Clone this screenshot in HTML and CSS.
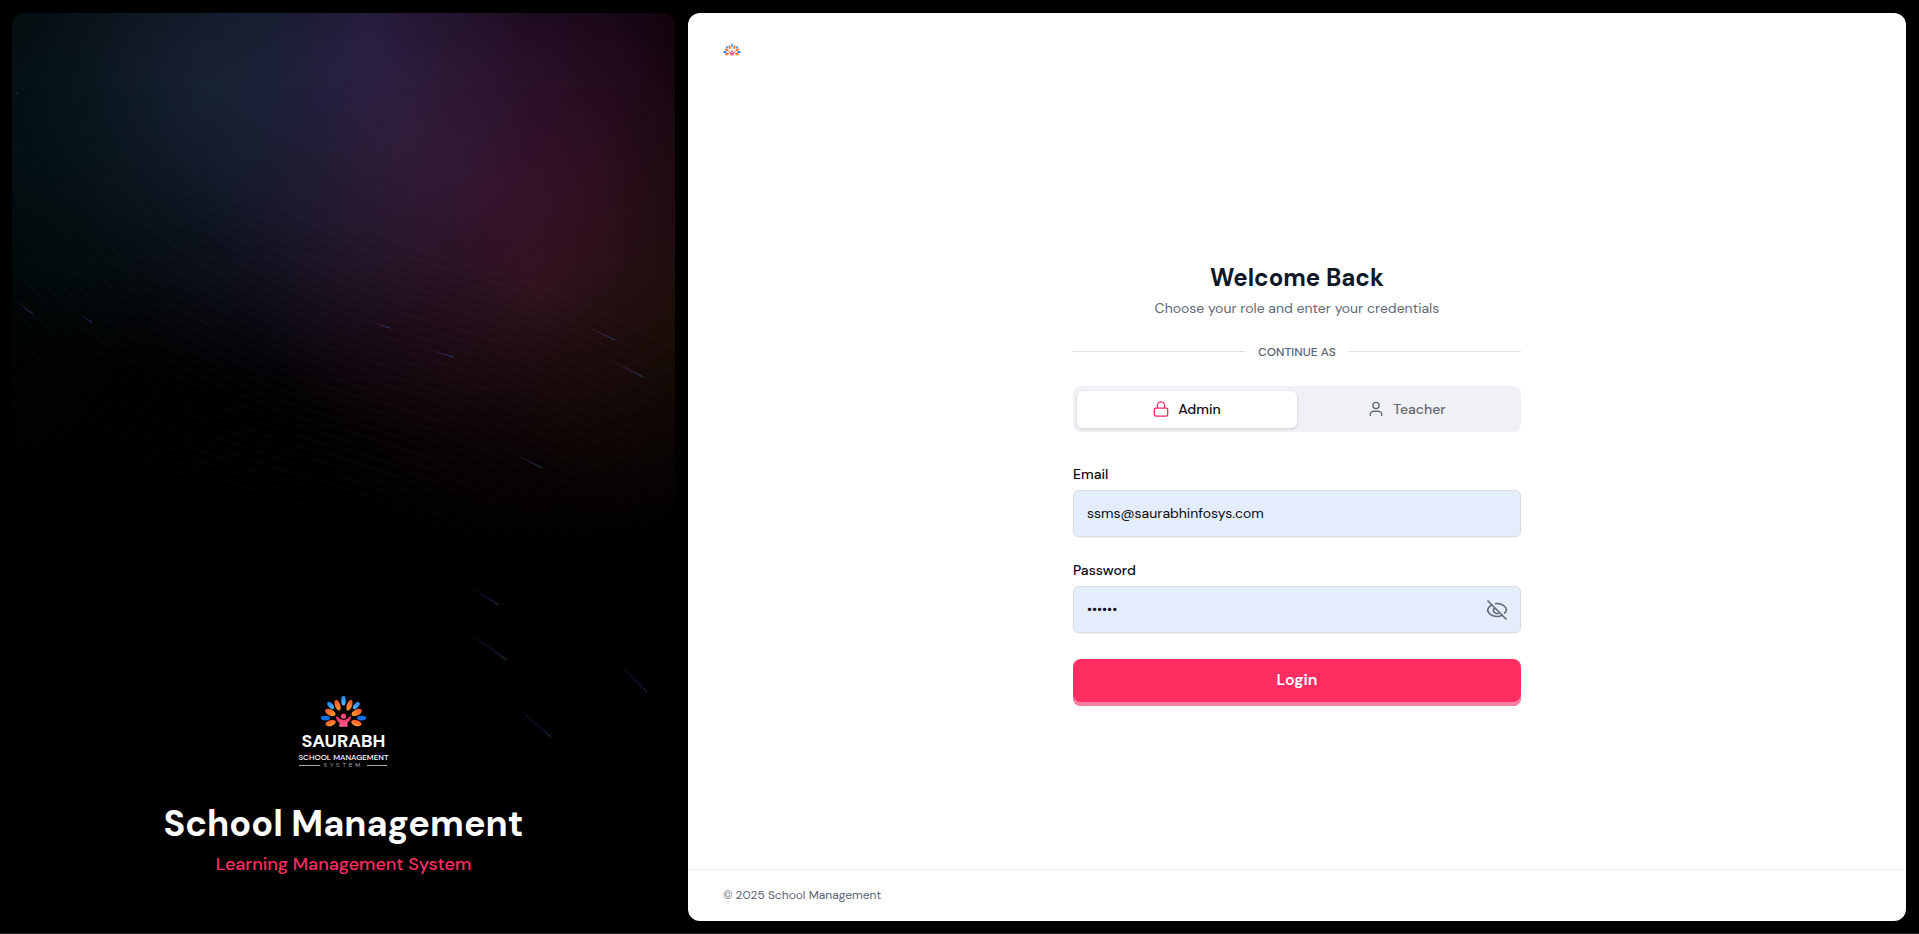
FILE: index.html
```html
<!DOCTYPE html>
<html lang="en">
	<head>
		<meta charset="UTF-8">
		<meta name="viewport" content="width=device-width, initial-scale=1">
		<title>School Management</title>
		<link rel="stylesheet" href="styles.css">
	</head>
	<body>
		<svg class="defs" width="0" height="0" aria-hidden="true">
			<defs>
				<linearGradient id="orange" x1="0" y1="0" x2="0" y2="1">
					<stop offset="0" stop-color="#f4512c"/>
					<stop offset="1" stop-color="#ff9a2e"/>
				</linearGradient>
				<linearGradient id="sky" x1="0" y1="0" x2="0" y2="1">
					<stop offset="0" stop-color="#1c84ea"/>
					<stop offset="1" stop-color="#5bb8ff"/>
				</linearGradient>
				<linearGradient id="pink" x1="0" y1="0" x2="0" y2="1">
					<stop offset="0" stop-color="#f22f62"/>
					<stop offset="1" stop-color="#ff5f8c"/>
				</linearGradient>
				<symbol id="emblem" viewBox="120 45 142 97">
					<ellipse cx="191" cy="62" rx="7" ry="15" fill="url(#sky)"/>
					<ellipse cx="173" cy="76" rx="8" ry="17" transform="rotate(-20 173 76)" fill="url(#orange)"/>
					<ellipse cx="209" cy="76" rx="8" ry="17" transform="rotate(20 209 76)" fill="url(#orange)"/>
					<ellipse cx="152" cy="77" rx="7" ry="13" transform="rotate(-42 152 77)" fill="url(#sky)"/>
					<ellipse cx="230" cy="77" rx="7" ry="13" transform="rotate(42 230 77)" fill="url(#sky)"/>
					<ellipse cx="151" cy="98" rx="9" ry="17" transform="rotate(-64 151 98)" fill="url(#orange)"/>
					<ellipse cx="231" cy="98" rx="9" ry="17" transform="rotate(64 231 98)" fill="url(#orange)"/>
					<ellipse cx="136" cy="115" rx="14" ry="7" fill="#1170e4"/>
					<ellipse cx="246" cy="115" rx="14" ry="7" fill="#1170e4"/>
					<ellipse cx="152" cy="130" rx="16" ry="9" transform="rotate(-16 152 130)" fill="url(#orange)"/>
					<ellipse cx="230" cy="130" rx="16" ry="9" transform="rotate(16 230 130)" fill="url(#orange)"/>
					<circle cx="191" cy="109" r="8" fill="url(#pink)"/>
					<path d="M168 111Q171 108 174 112Q181 121 191 121Q201 121 208 112Q211 108 214 111Q213 123 203 129L204 141H178L179 129Q169 123 168 111Z" fill="url(#pink)"/>
				</symbol>
			</defs>
		</svg>

		<div class="page">
			<aside class="hero">
				<svg class="beams" viewBox="0 0 696 316" aria-hidden="true">
					<defs>
						<radialGradient id="beamFade" cx="0" cy="0" r="1" gradientUnits="userSpaceOnUse" gradientTransform="translate(352 34) rotate(90) scale(555 1560)">
							<stop offset="0.07" stop-color="#d4d4d4"/>
							<stop offset="0.24" stop-color="#d4d4d4"/>
							<stop offset="0.43" stop-color="#fff" stop-opacity="0"/>
						</radialGradient>
					</defs>
				</svg>
				<svg class="sparks" viewBox="0 0 663 908" preserveAspectRatio="xMidYMid slice" aria-hidden="true"></svg>

				<div class="logo">
					<svg class="logo-mark" aria-hidden="true"><use href="#emblem"/></svg>
					<strong class="logo-name">SAURABH</strong>
					<span class="logo-sub">SCHOOL MANAGEMENT</span>
					<span class="logo-line">SYSTEM</span>
				</div>
				<h1>School Management</h1>
				<p class="tagline">Learning Management System</p>
			</aside>

			<main class="panel">
				<header class="top">
					<svg class="top-mark" role="img" aria-label="Saurabh"><use href="#emblem"/></svg>
				</header>

				<section class="content">
					<form class="login">
						<h2>Welcome Back</h2>
						<p class="intro">Choose your role and enter your credentials</p>
						<div class="divider">CONTINUE AS</div>

						<div class="roles">
							<button type="button" class="role selected">
								<svg viewBox="0 0 18 18" aria-hidden="true"><path d="M5 8V5a4 4 0 0 1 8 0V8M3 8h12a1.500 1.500 0 0 1 1.500 1.500v6a1.500 1.500 0 0 1-1.500 1.500h-12a1.500 1.500 0 0 1-1.500-1.500v-6A1.500 1.500 0 0 1 3 8z"/></svg>
								Admin
							</button>
							<button type="button" class="role">
								<svg viewBox="0 0 18 18" aria-hidden="true"><circle cx="9" cy="5" r="3.500"/><path d="M2.500 17v-1.500a4 4 0 0 1 4-4h5a4 4 0 0 1 4 4V17"/></svg>
								Teacher
							</button>
						</div>

						<label for="email">Email</label>
						<input id="email" type="email" value="ssms@saurabhinfosys.com">

						<label for="password">Password</label>
						<div class="password">
							<input id="password" type="password" value="123456">
							<button type="button" class="eye" aria-label="Show password">
								<svg viewBox="0 0 22 22" aria-hidden="true"><path d="M1.500 1.500l19 19M9 4.700Q10 4.500 11 4.500c5 0 9 3 9.500 6.500q-.4 2-2.300 3.700M5.200 6.200C3.200 7.500 2 9.300 1.500 11c.7 3.500 4.500 6.500 9.500 6.500q2.600 0 4.700-1M8.500 9a3.200 3.200 0 1 0 4.600 4.500"/></svg>
							</button>
						</div>

						<button type="submit" class="submit">Login</button>
					</form>
				</section>

				<footer>© 2025 School Management</footer>
			</main>
		</div>

		<script>
			var ns="http://www.w3.org/2000/svg";
			var beams=document.getElementsByClassName("beams")[0];
			var sparks=document.getElementsByClassName("sparks")[0];
			// fine curved lines, each one shifted a step right and up
			for(var i=0;i<50;i++){
				var x=i*7;
				var y=-i*8;
				var p=document.createElementNS(ns,"path");
				p.setAttribute("d","M"+(x-380)+" "+(y-189)+"C"+(x-380)+" "+(y-189)+" "+(x-312)+" "+(y+216)+" "+(x+152)+" "+(y+343)+"C"+(x+616)+" "+(y+470)+" "+(x+684)+" "+(y+875)+" "+(x+684)+" "+(y+875));
				beams.appendChild(p);
			}
			var list=[
				[1,76,6,81],[2,286,21,301],[69,303,80,309],[362,310,378,315],
				[421,338,441,344],[578,315,603,327],[600,348,631,364],[503,441,530,455],
				[455,572,487,592],[451,617,495,647],[604,647,635,679],[499,689,539,724]
			];
			for(var j=0;j<list.length;j++){
				var s=list[j];
				var g=document.createElementNS(ns,"linearGradient");
				g.id="spark"+j;
				g.setAttribute("gradientUnits","userSpaceOnUse");
				g.setAttribute("x1",s[0]);
				g.setAttribute("y1",s[1]);
				g.setAttribute("x2",s[2]);
				g.setAttribute("y2",s[3]);
				g.innerHTML='<stop offset="0" stop-color="#ae48ff" stop-opacity="0"/><stop offset="0.7" stop-color="#6344f5"/><stop offset="1" stop-color="#18ccfc"/>';
				sparks.appendChild(g);
				var l=document.createElementNS(ns,"path");
				l.setAttribute("d","M"+s[0]+" "+s[1]+"L"+s[2]+" "+s[3]);
				l.setAttribute("stroke","url(#spark"+j+")");
				sparks.appendChild(l);
			}
		</script>
	</body>
</html>
```
FILE: styles.css
```css
*{margin:0;padding:0;box-sizing:border-box;}
body{background:#000;font-family:"DM Sans",Inter,"Liberation Sans",sans-serif;font-size:14px;line-height:20px;color:#0a0a14;}
button,input{font:inherit;color:inherit;border:0;}
button{cursor:pointer;}
.defs{position:absolute;}
.page{display:flex;gap:13px;min-height:100vh;padding:13px 13px 12px 12px;border-bottom:1px solid #2e2e2e;}

/* left side */
.hero{
	flex:0 0 35%;display:flex;flex-direction:column;align-items:center;justify-content:flex-end;
	position:relative;overflow:hidden;padding:0 24px 43px;border-radius:12px;color:#fff;
	background:
		radial-gradient(ellipse 320px 290px at 30% 9%,rgb(12,28,36),#000),
		radial-gradient(ellipse 320px 400px at 54% 3%,rgb(26,16,42),#000),
		radial-gradient(ellipse 280px 260px at 71% 20%,rgb(22,6,20),#000),
		radial-gradient(ellipse 280px 270px at 79% 30%,rgb(26,10,8),#000),
		radial-gradient(ellipse 160px 320px at 0% 14%,rgb(0,8,8),#000),
		radial-gradient(ellipse 200px 240px at 100% 32%,rgb(12,7,3),#000),
		radial-gradient(ellipse 320px 280px at 92% 5%,rgb(20,3,12),#000),
		#000;
	background-blend-mode:screen;
}
.beams,.sparks{position:absolute;top:0;left:0;width:100%;height:100%;fill:none;}
.beams path{stroke:url(#beamFade);stroke-opacity:.04;stroke-width:1;}
.sparks{opacity:.35;}
.logo{position:relative;display:flex;flex-direction:column;align-items:center;width:88px;margin-bottom:33px;}
.logo-mark{width:47px;height:32px;margin-bottom:2px;}
.logo-name{font-size:18px;line-height:24px;}
.logo-sub{font-size:8px;line-height:8px;font-weight:500;white-space:nowrap;}
.logo-line{display:flex;align-items:center;gap:4px;width:100%;font-size:6px;line-height:8px;letter-spacing:3px;color:#aaa;}
.logo-line:before,.logo-line:after{content:"";flex:1;height:1px;background:#aaa;}
h1{position:relative;font-size:36px;line-height:44px;font-weight:700;}
.tagline{position:relative;margin-top:4px;font-size:18px;line-height:28px;font-weight:500;color:#ff2d62;}

/* right side */
.panel{flex:1;display:flex;flex-direction:column;background:#fff;border-radius:12px;}
.top{padding:30px 35px 42px;}
.top-mark{display:block;width:18px;height:13px;}
.content{flex:1;display:flex;align-items:center;justify-content:center;}
.login{display:flex;flex-direction:column;width:448px;}
h2{font-size:24px;line-height:32px;text-align:center;color:#101828;}
.intro{margin-top:4px;text-align:center;color:#616876;}
.divider{display:flex;align-items:center;gap:13px;margin:24px 0;font-size:12px;font-weight:500;color:#5a6272;}
.divider:before,.divider:after{content:"";flex:1;height:1px;background:#dfdfe8;}
.roles{display:flex;padding:5px 4px 4px;margin-bottom:32px;border-radius:8px;background:#f0f1f5;}
.role{flex:1;display:flex;align-items:center;justify-content:center;gap:9px;height:37px;border-radius:6px;background:none;font-weight:500;color:#616876;}
.role svg{width:16px;height:16px;fill:none;stroke:#616876;stroke-width:1.5;}
.role.selected{background:#fff;color:#0a0a14;box-shadow:0 1px 3px rgba(0,0,0,.15);}
.role.selected svg{stroke:#ff2d62;}
label{margin-bottom:6px;font-weight:500;}
input{width:100%;height:47px;padding:0 13px;margin-bottom:23px;border:1px solid #dcdde4;border-radius:6px;background:#e4edfc;box-shadow:0 1px 2px rgba(0,0,0,.06);outline:0;}
.password{position:relative;}
.eye{position:absolute;top:12px;right:12px;width:24px;height:24px;background:none;}
.eye svg{display:block;width:22px;height:22px;margin:0 auto;fill:none;stroke:#616876;stroke-width:1.6;}
.submit{height:47px;margin-top:3px;padding-bottom:4px;border-radius:8px;background:#ff2d62;box-shadow:inset 0 -4px 0 #ff80a2;font-size:16px;font-weight:600;color:#fff;}
footer{padding:15px 35px 16px;border-top:1px solid #ececf0;font-size:12px;color:#5a6272;}
```
